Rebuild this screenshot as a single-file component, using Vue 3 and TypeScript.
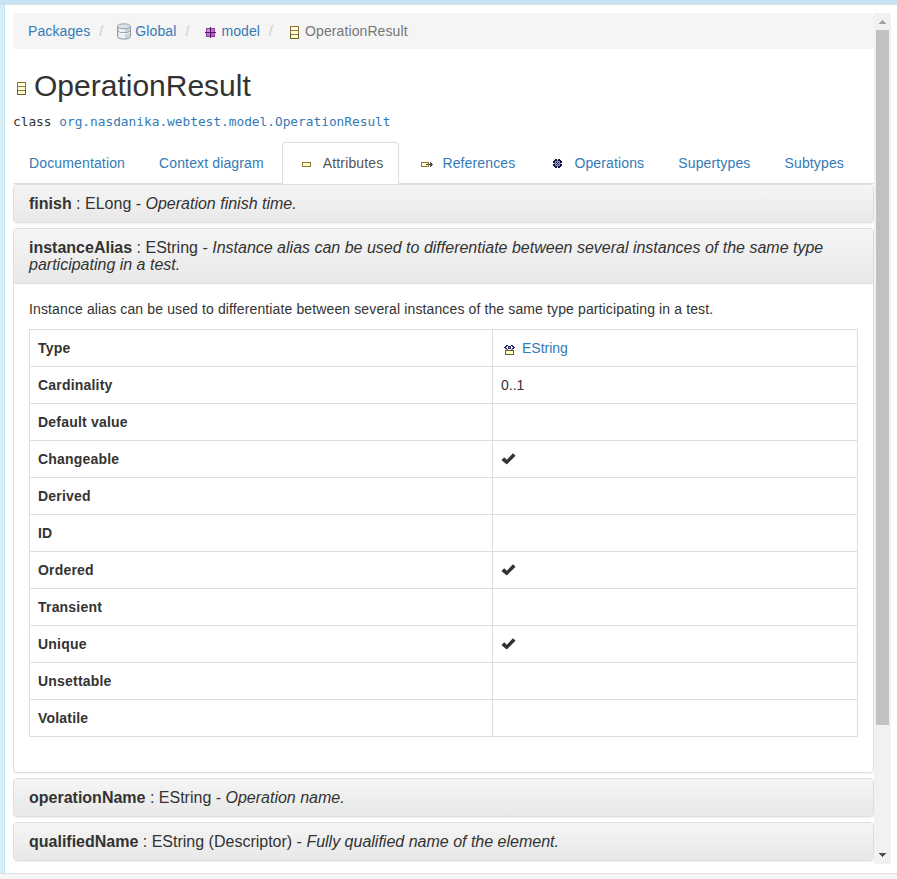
<script setup lang="ts">
import { defineComponent, h } from 'vue'

type IconName = 'database' | 'package' | 'class' | 'attribute' | 'reference' | 'operation' | 'datatype'

interface Crumb {
  label: string
  icon?: IconName
}

interface Tab {
  label: string
  icon?: IconName
  active?: boolean
}

interface Attribute {
  name: string
  type: string
  summary: string
  open?: boolean
}

interface Row {
  label: string
  kind: 'type' | 'text' | 'check'
  value?: string
}

// Each entry is [x, y, width, height, colour] on a 16px grid.
type Px = [number, number, number, number, string]

const pixels: Record<Exclude<IconName, 'database'>, Px[]> = {
  package: [
    [4, 5, 9, 9, '#8d3fa0'],
    [5, 6, 3, 3, '#c48bd2'],
    [9, 6, 3, 3, '#b779c6'],
    [5, 10, 3, 3, '#b779c6'],
    [9, 10, 3, 3, '#a866b8'],
    [8, 4, 1, 11, '#5b1a70'],
    [3, 9, 11, 1, '#5b1a70'],
  ],
  class: [
    [4, 3, 9, 13, '#8f7331'],
    [4, 11, 9, 5, '#6d5c30'],
    [5, 4, 7, 3, '#ffffdc'],
    [5, 8, 7, 3, '#ffffd2'],
    [5, 12, 7, 3, '#ffffc8'],
    [5, 7, 7, 1, '#8a7d58'],
    [5, 11, 7, 1, '#8a7d58'],
  ],
  attribute: [
    [4, 7, 9, 5, '#927532'],
    [5, 8, 7, 3, '#ffffd2'],
  ],
  reference: [
    [4, 7, 8, 5, '#927532'],
    [5, 8, 6, 3, '#ffffd2'],
    [9, 9, 7, 1, '#484848'],
    [13, 7, 1, 5, '#484848'],
    [14, 8, 1, 3, '#484848'],
  ],
  operation: [
    [5, 5, 7, 7, '#15153f'],
    [6, 4, 2, 9, '#15153f'],
    [9, 4, 2, 9, '#15153f'],
    [4, 6, 9, 2, '#15153f'],
    [4, 9, 9, 2, '#15153f'],
    [6, 6, 5, 5, '#7890b8'],
    [8, 5, 1, 1, '#7890b8'],
    [8, 11, 1, 1, '#7890b8'],
    [5, 8, 1, 1, '#7890b8'],
    [11, 8, 1, 1, '#7890b8'],
    [7, 7, 3, 3, '#15153f'],
    [8, 7, 1, 3, '#a9bad5'],
    [7, 8, 3, 1, '#a9bad5'],
    [8, 8, 1, 1, '#15153f'],
  ],
  datatype: [
    [4, 10, 9, 5, '#6d5c30'],
    [5, 11, 7, 3, '#ffffc8'],
    [5, 5, 2, 1, '#26266a'],
    [10, 5, 2, 1, '#26266a'],
    [4, 6, 2, 1, '#26266a'],
    [11, 6, 2, 1, '#26266a'],
    [3, 7, 2, 1, '#26266a'],
    [12, 7, 2, 1, '#26266a'],
    [4, 8, 2, 1, '#26266a'],
    [11, 8, 2, 1, '#26266a'],
    [7, 6, 3, 3, '#26266a'],
    [8, 7, 1, 1, '#a9bad5'],
    [5, 9, 2, 1, '#8a8aac'],
    [10, 9, 2, 1, '#8a8aac'],
  ],
}

const ModelIcon = defineComponent({
  props: { name: { type: String, required: true } },
  setup(props) {
    return () => {
      if (props.name === 'database') {
        return h('svg', { viewBox: '0 0 16 18', width: 16, height: 18 }, [
          h('path', { d: 'M1.5 4.5V14.5C1.5 18 14.5 18 14.5 14.5V4.5Z', fill: '#cbd3da', stroke: '#929ca6' }),
          h('path', { d: 'M3 6V15C5 16.4 8 16.4 9 16V7Z', fill: '#eef2f5' }),
          h('path', { d: 'M2 9.2C3 11.2 13 11.2 14 9.2', fill: 'none', stroke: '#8e99a4' }),
          h('path', { d: 'M2 10.2C3 12.2 13 12.2 14 10.2', fill: 'none', stroke: '#f6f8fa' }),
          h('ellipse', { cx: 8, cy: 4.3, rx: 6.5, ry: 2.5, fill: '#dce2e7', stroke: '#98a2ac' }),
        ])
      }
      return h(
        'svg',
        { viewBox: '0 0 16 16', width: 16, height: 16, 'shape-rendering': 'crispEdges' },
        pixels[props.name as Exclude<IconName, 'database'>].map(([x, y, width, height, fill]) =>
          h('rect', { x, y, width, height, fill }),
        ),
      )
    }
  },
})

const crumbs: Crumb[] = [
  { label: 'Packages' },
  { label: 'Global', icon: 'database' },
  { label: 'model', icon: 'package' },
  { label: 'OperationResult', icon: 'class' },
]

const tabs: Tab[] = [
  { label: 'Documentation' },
  { label: 'Context diagram' },
  { label: 'Attributes', icon: 'attribute', active: true },
  { label: 'References', icon: 'reference' },
  { label: 'Operations', icon: 'operation' },
  { label: 'Supertypes' },
  { label: 'Subtypes' },
]

const aliasDoc =
  'Instance alias can be used to differentiate between several instances of the same type participating in a test.'

const attributes: Attribute[] = [
  { name: 'finish', type: 'ELong', summary: 'Operation finish time.' },
  { name: 'instanceAlias', type: 'EString', summary: aliasDoc, open: true },
  { name: 'operationName', type: 'EString', summary: 'Operation name.' },
  { name: 'qualifiedName', type: 'EString (Descriptor)', summary: 'Fully qualified name of the element.' },
]

const rows: Row[] = [
  { label: 'Type', kind: 'type', value: 'EString' },
  { label: 'Cardinality', kind: 'text', value: '0..1' },
  { label: 'Default value', kind: 'text' },
  { label: 'Changeable', kind: 'check' },
  { label: 'Derived', kind: 'text' },
  { label: 'ID', kind: 'text' },
  { label: 'Ordered', kind: 'check' },
  { label: 'Transient', kind: 'text' },
  { label: 'Unique', kind: 'check' },
  { label: 'Unsettable', kind: 'text' },
  { label: 'Volatile', kind: 'text' },
]
</script>

<template>
  <div class="window">
    <div class="frame">
      <main class="content">
        <ol class="breadcrumb">
          <li v-for="(crumb, i) in crumbs" :key="crumb.label">
            <span v-if="i > 0" class="slash">/</span>
            <ModelIcon v-if="crumb.icon" :name="crumb.icon" class="crumb-icon" />
            <a v-if="i < crumbs.length - 1" href="#">{{ crumb.label }}</a>
            <span v-else class="current">{{ crumb.label }}</span>
          </li>
        </ol>

        <h2 class="title"><ModelIcon name="class" class="title-icon" />OperationResult</h2>
        <div class="signature">class <a href="#">org.nasdanika.webtest.model.OperationResult</a></div>

        <ul class="tabs">
          <li v-for="tab in tabs" :key="tab.label" :class="{ active: tab.active }">
            <a href="#"><ModelIcon v-if="tab.icon" :name="tab.icon" class="tab-icon" />{{ tab.label }}</a>
          </li>
        </ul>

        <div class="panels">
          <section v-for="attr in attributes" :key="attr.name" class="panel">
            <h4 class="panel-heading">
              <b>{{ attr.name }}</b> : {{ attr.type }} - <i>{{ attr.summary }}</i>
            </h4>
            <div v-if="attr.open" class="panel-body">
              <p>{{ attr.summary }}</p>
              <table>
                <tbody>
                  <tr v-for="row in rows" :key="row.label">
                    <th>{{ row.label }}</th>
                    <td>
                      <div v-if="row.kind === 'type'" class="type">
                        <ModelIcon name="datatype" /><a href="#">{{ row.value }}</a>
                      </div>
                      <svg v-else-if="row.kind === 'check'" class="check" width="16" height="14" viewBox="0 0 16 14">
                        <path d="M.6 7.9 2.9 5.6Q3.2 5.3 3.5 5.6L5.8 7.7 11.7 1.6Q12 1.3 12.3 1.6L14.3 3.4Q14.6 3.7 14.3 4L6.1 12.2Q5.8 12.5 5.5 12.2L.6 8.3Z" fill="#333" />
                      </svg>
                      <template v-else>{{ row.value }}</template>
                    </td>
                  </tr>
                </tbody>
              </table>
            </div>
          </section>
        </div>
      </main>

      <div class="scrollbar">
        <svg class="arrow" width="17" height="17" shape-rendering="crispEdges">
          <path d="M8 7h1v1h1v1h1v1h1v1H5v-1h1V9h1V8h1z" fill="#a3a3a3" />
        </svg>
        <div class="thumb"></div>
        <svg class="arrow" width="17" height="17" shape-rendering="crispEdges">
          <path d="M5 6h7v1h-1v1h-1v1H9v1H8V9H7V8H6V7H5z" fill="#505050" />
        </svg>
      </div>
    </div>
  </div>
</template>

<style>
body {
  margin: 0;
  overflow: hidden;
}
</style>

<style scoped>
* {
  box-sizing: border-box;
}
.window {
  height: 879px;
  background: #f5f5f5;
  border-top: 4px solid #c5e3f2;
  font: 14px/20px "Liberation Sans", Arial, sans-serif;
  color: #333;
}
.frame {
  display: flex;
  height: 870px;
  padding: 8px 6px 9px 13px;
  border-top: 1px solid #ddd;
  border-bottom: 1px solid #ddd;
  background: linear-gradient(90deg, #d9edf7 4px, #bce8f1 4px, #bce8f1 5px, #fff 5px);
}
svg {
  display: block;
  flex: none;
}
a {
  color: #337ab7;
  text-decoration: none;
}
.content {
  width: 861px;
  height: 851px;
  overflow: hidden;
}
.breadcrumb {
  display: flex;
  height: 36px;
  margin: 0 0 20px;
  padding: 8px 15px;
  list-style: none;
  background: #f5f5f5;
  border-radius: 4px;
  letter-spacing: 0.1px;
}
.breadcrumb li {
  display: flex;
  align-items: center;
}
.slash {
  width: 4px;
  margin: 0 13px 0 9px;
  color: #ccc;
}
.crumb-icon {
  margin-right: 3px;
}
.current {
  color: #777;
}
.title {
  display: flex;
  height: 33px;
  margin: 0 0 10px;
  font-size: 30px;
  font-weight: 400;
  line-height: 33px;
}
.title-icon {
  margin: 10px 5px 0 0;
}
.signature {
  height: 20px;
  margin-bottom: 10px;
  font: 12.8px/19px "DejaVu Sans Mono", monospace;
}
.tabs {
  display: flex;
  height: 42px;
  margin: 0;
  padding: 0;
  list-style: none;
  border-bottom: 1px solid #ddd;
  letter-spacing: 0.14px;
}
.tabs a {
  display: flex;
  align-items: center;
  height: 42px;
  margin-right: 2px;
  padding: 0 15px 1px;
  border: 1px solid transparent;
  border-bottom: 0;
  border-radius: 4px 4px 0 0;
}
.tabs .active a {
  color: #555;
  background: #fff;
  border-color: #ddd;
}
.tab-icon {
  margin-right: 9px;
}
.panels {
  display: flex;
  flex-direction: column;
  gap: 5px;
}
.panel {
  flex: none;
  border: 1px solid #ddd;
  border-radius: 4px;
  background: #fff;
  box-shadow: 0 1px 2px rgba(0, 0, 0, 0.05);
  overflow: hidden;
}
.panel-heading {
  margin: 0;
  padding: 10px 15px;
  font-size: 16px;
  font-weight: 400;
  line-height: 17px;
  background: linear-gradient(#f5f5f5, #e8e8e8);
}
.panel-body {
  padding: 15px 15px 35px;
  border-top: 1px solid #ddd;
}
.panel-body p {
  margin: 0 0 10px;
  letter-spacing: 0.123px;
}
table {
  width: 829px;
  table-layout: fixed;
  border-collapse: collapse;
}
th,
td {
  height: 37px;
  padding: 8px;
  border: 1px solid #ddd;
  text-align: left;
  line-height: 20px;
}
th {
  width: 463px;
  letter-spacing: 0.2px;
}
.type {
  display: flex;
  align-items: center;
  gap: 5px;
}
.check {
  position: relative;
  top: 0;
}
.scrollbar {
  display: flex;
  flex-direction: column;
  width: 17px;
  height: 851px;
  background: #f1f1f1;
}
.thumb {
  height: 695px;
  margin: 0 2px 122px;
  background: #c1c1c1;
}
</style>
